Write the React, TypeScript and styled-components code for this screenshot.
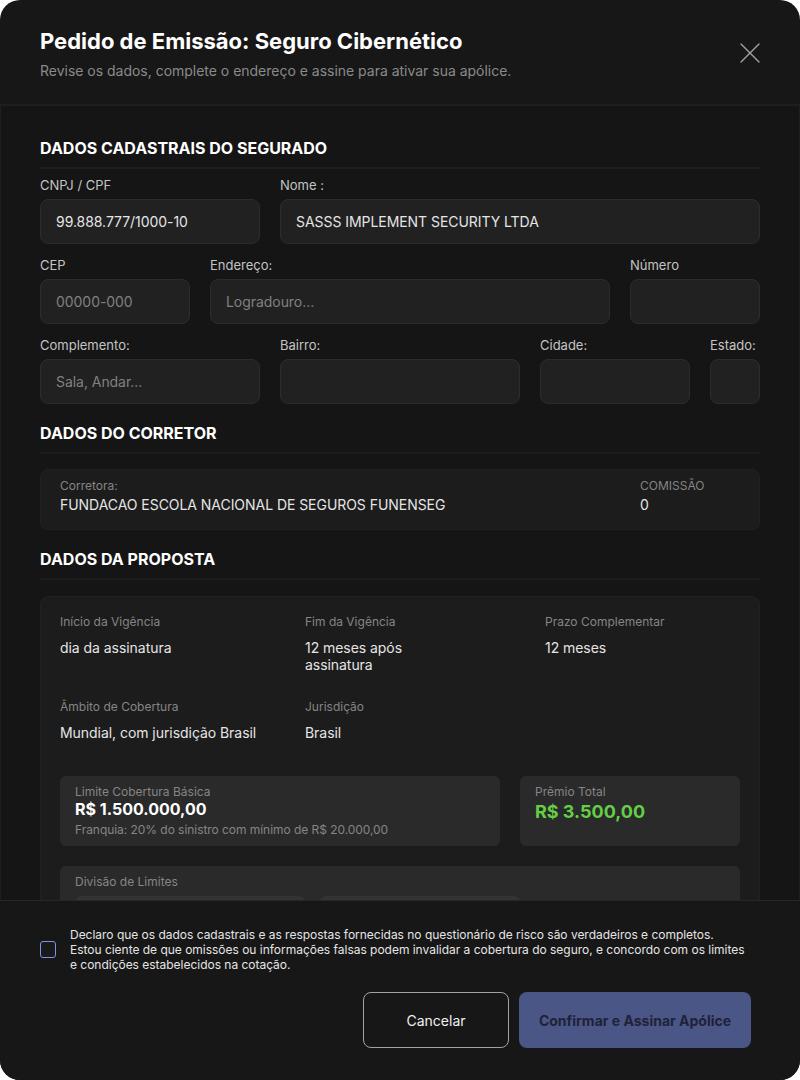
import styled, { createGlobalStyle } from "styled-components";
import { X } from "lucide-react";

const GlobalStyle = createGlobalStyle`
  html, body {
    margin: 0;
    padding: 0;
    background: #ffffff;
    font-family: "Inter", "Liberation Sans", sans-serif;
  }
  * {
    box-sizing: border-box;
  }
`;

const Modal = styled.div`
  width: 800px;
  height: 1080px;
  display: flex;
  flex-direction: column;
  background: #171717;
  border-radius: 20px;
  overflow: hidden;
  color: #ffffff;
`;

const Header = styled.header`
  height: 106px;
  flex: none;
  display: flex;
  justify-content: space-between;
  padding: 28px 40px 0;
  border-bottom: 2px solid #1f1f1f;
`;

const Title = styled.h1`
  margin: 0;
  font-size: 22px;
  line-height: 27px;
  font-weight: 700;
  color: #ffffff;
`;

const Subtitle = styled.p`
  margin: 7px 0 0;
  font-size: 14px;
  line-height: 17px;
  letter-spacing: -0.015px;
  color: #8a8a8a;
`;

const CloseButton = styled.button`
  width: 20px;
  height: 20px;
  margin-top: 15px;
  padding: 0;
  border: none;
  background: none;
  color: #a3a3a3;
  display: flex;
  align-items: center;
  justify-content: center;
`;

const Body = styled.main`
  flex: 1;
  min-height: 0;
  overflow: hidden;
  padding: 32px 40px 0;
  border-left: 1px solid #1f1f1f;
  border-right: 1px solid #1f1f1f;
  margin: 0;
  background: #151515;
`;

const Section = styled.section`
  display: flow-root;
  margin-bottom: 6px;
`;

const SectionTitle = styled.h2`
  margin: 0 -1px 8px;
  height: 31px;
  padding-bottom: 10px;
  font-size: 16px;
  line-height: 21px;
  font-weight: 700;
  color: #ffffff;
  text-transform: uppercase;
  border-bottom: 2px solid #1d1d1d;
`;

const FormRow = styled.div<{ $cols: string }>`
  display: grid;
  grid-template-columns: ${(p) => p.$cols};
  gap: 20px;
  margin: 0 -1px 13px;
`;

const Field = styled.div`
  display: flex;
  flex-direction: column;
  min-width: 0;
`;

const Label = styled.label`
  font-size: 13px;
  line-height: 16px;
  color: #c4c4c4;
  margin-bottom: 6px;
`;

const Input = styled.input`
  width: 100%;
  height: 45px;
  padding: 0 15px;
  background: #212121;
  border: 1px solid #2c2c2c;
  border-radius: 8px;
  font-family: inherit;
  font-size: 14px;
  letter-spacing: -0.05px;
  color: #e5e5e5;
  outline: none;
  &::placeholder {
    color: #808080;
    opacity: 1;
  }
`;

const BrokerCard = styled.div`
  margin: 15px -1px 13px;
  height: 61px;
  padding: 8px 19px 0;
  display: grid;
  grid-template-columns: 1fr 100px;
  background: #1c1c1c;
  border: 1px solid #212121;
  border-radius: 8px;
`;

const SmallLabel = styled.div`
  font-size: 12px;
  line-height: 15px;
  color: #858585;
`;

const BrokerValue = styled.div`
  margin-top: 3px;
  font-size: 14px;
  line-height: 17px;
  letter-spacing: -0.05px;
  color: #e5e5e5;
`;

const ProposalCard = styled.div`
  margin: 16px -1px 0;
  padding: 17px 19px 0;
  background: #1c1c1c;
  border: 1px solid #212121;
  border-radius: 8px;
  height: 400px;
`;

const InfoGrid = styled.div`
  display: grid;
  grid-template-columns: 245px 240px 1fr;
  row-gap: 26px;
`;

const InfoItem = styled.div``;

const InfoValue = styled.div`
  margin-top: 10px;
  max-width: 130px;
  font-size: 14px;
  line-height: 17px;
  letter-spacing: -0.05px;
  color: #e5e5e5;
  &.wide {
    max-width: none;
    white-space: nowrap;
  }
`;

const StatsRow = styled.div`
  display: grid;
  grid-template-columns: 440px 220px;
  gap: 20px;
  margin-top: 35px;
`;

const StatCard = styled.div`
  height: 70px;
  padding: 8px 15px 0;
  background: #2a2a2a;
  border-radius: 6px;
`;

const StatValue = styled.div<{ $green?: boolean }>`
  font-size: ${(p) => (p.$green ? "18px" : "16px")};
  line-height: ${(p) => (p.$green ? "22px" : "19px")};
  margin-top: ${(p) => (p.$green ? "2px" : "1px")};
  font-weight: 700;
  color: ${(p) => (p.$green ? "#63cf45" : "#ffffff")};
`;

const StatNote = styled.div`
  margin-top: 3px;
  font-size: 12px;
  line-height: 15px;
  letter-spacing: -0.05px;
  color: #858585;
`;

const LimitsCard = styled.div`
  margin-top: 20px;
  height: 120px;
  padding: 8px 15px 0;
  background: #2a2a2a;
  border-radius: 6px;
`;

const LimitsRow = styled.div`
  display: grid;
  grid-template-columns: 230px 200px;
  gap: 15px;
  margin-top: 7px;
`;

const LimitBox = styled.div`
  height: 60px;
  background: #333333;
  border-radius: 6px;
`;

const Footer = styled.footer`
  flex: none;
  height: 180px;
  padding: 26px 49px 0 40px;
  background: #171717;
  border-top: 1px solid #262626;
`;

const Declaration = styled.label`
  display: flex;
  align-items: center;
  gap: 14px;
  padding-right: 5px;
`;

const CheckBox = styled.span`
  flex: none;
  width: 16px;
  height: 17px;
  border: 1px solid #7b93e8;
  border-radius: 3px;
  background: #1a1a1a;
`;

const DeclarationText = styled.p`
  margin: 0;
  font-size: 12px;
  line-height: 15px;
  letter-spacing: -0.02px;
  color: #e5e5e5;
`;

const Actions = styled.div`
  display: flex;
  justify-content: flex-end;
  gap: 10px;
  margin-top: 20px;
`;

const CancelButton = styled.button`
  width: 146px;
  height: 56px;
  background: transparent;
  border: 1px solid #a3a3a3;
  border-radius: 8px;
  font-family: inherit;
  font-size: 14px;
  font-weight: 400;
  color: #f0f0f0;
`;

const ConfirmButton = styled.button`
  width: 232px;
  height: 56px;
  background: #4a5685;
  border: none;
  border-radius: 8px;
  font-family: inherit;
  font-size: 14px;
  font-weight: 700;
  color: #1f2238;
`;

export default function App() {
  return (
    <>
      <GlobalStyle />
      <Modal>
        <Header>
          <div>
            <Title>Pedido de Emissão: Seguro Cibernético</Title>
            <Subtitle>Revise os dados, complete o endereço e assine para ativar sua apólice.</Subtitle>
          </div>
          <CloseButton aria-label="Fechar">
            <X size={36} strokeWidth={0.9} style={{ flex: "none" }} />
          </CloseButton>
        </Header>
        <Body>
          <Section>
            <SectionTitle>Dados Cadastrais do Segurado</SectionTitle>
            <FormRow $cols="220px 1fr">
              <Field>
                <Label>CNPJ / CPF</Label>
                <Input readOnly value="99.888.777/1000-10" />
              </Field>
              <Field>
                <Label>Nome :</Label>
                <Input readOnly value="SASSS IMPLEMENT SECURITY LTDA" />
              </Field>
            </FormRow>
            <FormRow $cols="150px 1fr 130px">
              <Field>
                <Label>CEP</Label>
                <Input placeholder="00000-000" />
              </Field>
              <Field>
                <Label>Endereço:</Label>
                <Input placeholder="Logradouro..." />
              </Field>
              <Field>
                <Label>Número</Label>
                <Input />
              </Field>
            </FormRow>
            <FormRow $cols="220px 240px 150px 50px">
              <Field>
                <Label>Complemento:</Label>
                <Input placeholder="Sala, Andar..." />
              </Field>
              <Field>
                <Label>Bairro:</Label>
                <Input />
              </Field>
              <Field>
                <Label>Cidade:</Label>
                <Input />
              </Field>
              <Field>
                <Label>Estado:</Label>
                <Input />
              </Field>
            </FormRow>
          </Section>
          <Section>
            <SectionTitle>Dados do Corretor</SectionTitle>
            <BrokerCard>
              <div>
                <SmallLabel>Corretora:</SmallLabel>
                <BrokerValue>FUNDACAO ESCOLA NACIONAL DE SEGUROS FUNENSEG</BrokerValue>
              </div>
              <div>
                <SmallLabel>COMISSÃO</SmallLabel>
                <BrokerValue>0</BrokerValue>
              </div>
            </BrokerCard>
          </Section>
          <Section>
            <SectionTitle>Dados da Proposta</SectionTitle>
            <ProposalCard>
              <InfoGrid>
                <InfoItem>
                  <SmallLabel>Início da Vigência</SmallLabel>
                  <InfoValue className="wide">dia da assinatura</InfoValue>
                </InfoItem>
                <InfoItem>
                  <SmallLabel>Fim da Vigência</SmallLabel>
                  <InfoValue>12 meses após assinatura</InfoValue>
                </InfoItem>
                <InfoItem>
                  <SmallLabel>Prazo Complementar</SmallLabel>
                  <InfoValue className="wide">12 meses</InfoValue>
                </InfoItem>
                <InfoItem>
                  <SmallLabel>Âmbito de Cobertura</SmallLabel>
                  <InfoValue className="wide">Mundial, com jurisdição Brasil</InfoValue>
                </InfoItem>
                <InfoItem>
                  <SmallLabel>Jurisdição</SmallLabel>
                  <InfoValue className="wide">Brasil</InfoValue>
                </InfoItem>
              </InfoGrid>
              <StatsRow>
                <StatCard>
                  <SmallLabel>Limite Cobertura Básica</SmallLabel>
                  <StatValue>R$ 1.500.000,00</StatValue>
                  <StatNote>Franquia: 20% do sinistro com mínimo de R$ 20.000,00</StatNote>
                </StatCard>
                <StatCard>
                  <SmallLabel>Prêmio Total</SmallLabel>
                  <StatValue $green>R$ 3.500,00</StatValue>
                </StatCard>
              </StatsRow>
              <LimitsCard>
                <SmallLabel>Divisão de Limites</SmallLabel>
                <LimitsRow>
                  <LimitBox />
                  <LimitBox />
                </LimitsRow>
              </LimitsCard>
            </ProposalCard>
          </Section>
        </Body>
        <Footer>
          <Declaration>
            <CheckBox />
            <DeclarationText>
              Declaro que os dados cadastrais e as respostas fornecidas no questionário de risco são verdadeiros e
              completos. Estou ciente de que omissões ou informações falsas podem invalidar a cobertura do seguro, e
              concordo com os limites e condições estabelecidos na cotação.
            </DeclarationText>
          </Declaration>
          <Actions>
            <CancelButton>Cancelar</CancelButton>
            <ConfirmButton>Confirmar e Assinar Apólice</ConfirmButton>
          </Actions>
        </Footer>
      </Modal>
    </>
  );
}
